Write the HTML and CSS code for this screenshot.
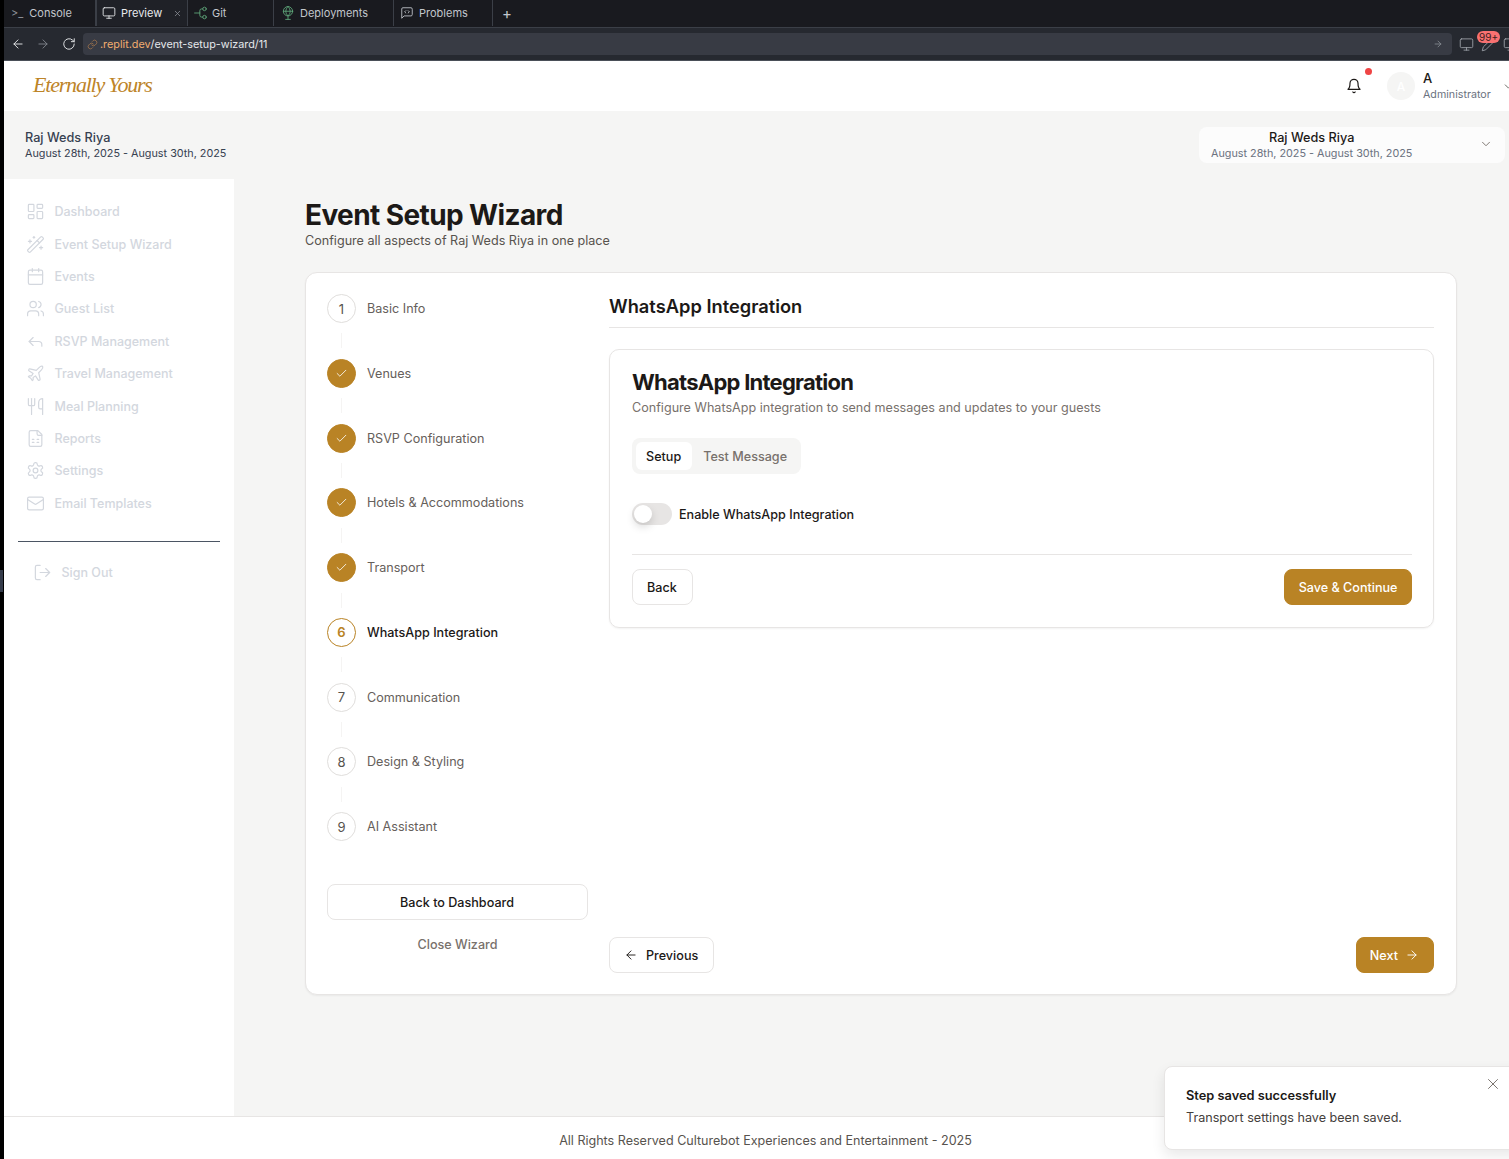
FILE: index.html
```html
<!DOCTYPE html>
<html lang="en">
<head>
  <meta charset="UTF-8">
  <title>Event Setup Wizard</title>
  <link rel="stylesheet" href="styles.css">
</head>
<body>
  <svg class="sprite" xmlns="http://www.w3.org/2000/svg">
    <symbol id="i-dashboard" viewBox="0 0 24 24"><rect x="3" y="3" width="7" height="9" rx="1"/><rect x="14" y="3" width="7" height="5" rx="1"/><rect x="14" y="12" width="7" height="9" rx="1"/><rect x="3" y="16" width="7" height="5" rx="1"/></symbol>
    <symbol id="i-wand" viewBox="0 0 24 24"><path d="m21.64 3.64-1.28-1.28a1.21 1.21 0 0 0-1.72 0L2.36 18.64a1.21 1.21 0 0 0 0 1.72l1.28 1.28a1.2 1.2 0 0 0 1.72 0L21.64 5.36a1.2 1.2 0 0 0 0-1.72"/><path d="m14 7 3 3"/><path d="M5 6v4"/><path d="M19 14v4"/><path d="M10 2v2"/><path d="M7 8H3"/><path d="M21 16h-4"/><path d="M11 3H9"/></symbol>
    <symbol id="i-calendar" viewBox="0 0 24 24"><path d="M8 2v4"/><path d="M16 2v4"/><rect x="3" y="4" width="18" height="18" rx="2"/><path d="M3 10h18"/></symbol>
    <symbol id="i-users" viewBox="0 0 24 24"><path d="M16 21v-2a4 4 0 0 0-4-4H6a4 4 0 0 0-4 4v2"/><circle cx="9" cy="7" r="4"/><path d="M22 21v-2a4 4 0 0 0-3-3.87"/><path d="M16 3.13a4 4 0 0 1 0 7.75"/></symbol>
    <symbol id="i-reply" viewBox="0 0 24 24"><polyline points="9 17 4 12 9 7"/><path d="M20 18v-2a4 4 0 0 0-4-4H4"/></symbol>
    <symbol id="i-plane" viewBox="0 0 24 24"><path d="M17.8 19.2 16 11l3.5-3.5C21 6 21.5 4 21 3c-1-.5-3 0-4.5 1.5L13 8 4.8 6.2c-.5-.1-.9.1-1.1.5l-.3.5c-.2.5-.1 1 .3 1.3L9 12l-2 3H4l-1 1 3 2 2 3 1-1v-3l3-2 3.5 5.3c.3.4.8.5 1.3.3l.5-.2c.4-.3.6-.7.5-1.2z"/></symbol>
    <symbol id="i-utensils" viewBox="0 0 24 24"><path d="M3 2v7c0 1.1.9 2 2 2h4a2 2 0 0 0 2-2V2"/><path d="M7 2v20"/><path d="M21 15V2a5 5 0 0 0-5 5v6c0 1.1.9 2 2 2h3Zm0 0v7"/></symbol>
    <symbol id="i-sheet" viewBox="0 0 24 24"><path d="M15 2H6a2 2 0 0 0-2 2v16a2 2 0 0 0 2 2h12a2 2 0 0 0 2-2V7Z"/><path d="M14 2v4a2 2 0 0 0 2 2h4"/><path d="M8 13h2"/><path d="M14 13h2"/><path d="M8 17h2"/><path d="M14 17h2"/></symbol>
    <symbol id="i-settings" viewBox="0 0 24 24"><path d="M12.22 2h-.44a2 2 0 0 0-2 2v.18a2 2 0 0 1-1 1.73l-.43.25a2 2 0 0 1-2 0l-.15-.08a2 2 0 0 0-2.73.73l-.22.38a2 2 0 0 0 .73 2.73l.15.1a2 2 0 0 1 1 1.72v.51a2 2 0 0 1-1 1.74l-.15.09a2 2 0 0 0-.73 2.73l.22.38a2 2 0 0 0 2.73.73l.15-.08a2 2 0 0 1 2 0l.43.25a2 2 0 0 1 1 1.73V20a2 2 0 0 0 2 2h.44a2 2 0 0 0 2-2v-.18a2 2 0 0 1 1-1.73l.43-.25a2 2 0 0 1 2 0l.15.08a2 2 0 0 0 2.73-.73l.22-.39a2 2 0 0 0-.73-2.73l-.15-.08a2 2 0 0 1-1-1.74v-.5a2 2 0 0 1 1-1.74l.15-.09a2 2 0 0 0 .73-2.73l-.22-.38a2 2 0 0 0-2.73-.73l-.15.08a2 2 0 0 1-2 0l-.43-.25a2 2 0 0 1-1-1.73V4a2 2 0 0 0-2-2z"/><circle cx="12" cy="12" r="3"/></symbol>
    <symbol id="i-mail" viewBox="0 0 24 24"><rect x="2" y="4" width="20" height="16" rx="2"/><path d="m22 7-8.97 5.7a1.94 1.94 0 0 1-2.06 0L2 7"/></symbol>
    <symbol id="i-logout" viewBox="0 0 24 24"><path d="M9 21H5a2 2 0 0 1-2-2V5a2 2 0 0 1 2-2h4"/><polyline points="16 17 21 12 16 7"/><line x1="21" y1="12" x2="9" y2="12"/></symbol>
    <symbol id="i-bell" viewBox="0 0 24 24"><path d="M6 8a6 6 0 0 1 12 0c0 7 3 9 3 9H3s3-2 3-9"/><path d="M10.3 21a1.94 1.94 0 0 0 3.4 0"/></symbol>
    <symbol id="i-chevron" viewBox="0 0 24 24"><path d="m6 9 6 6 6-6"/></symbol>
    <symbol id="i-check" viewBox="0 0 24 24"><path d="M20 6 9 17l-5-5"/></symbol>
    <symbol id="i-left" viewBox="0 0 24 24"><path d="m12 19-7-7 7-7"/><path d="M19 12H5"/></symbol>
    <symbol id="i-right" viewBox="0 0 24 24"><path d="M5 12h14"/><path d="m12 5 7 7-7 7"/></symbol>
    <symbol id="i-x" viewBox="0 0 24 24"><path d="M18 6 6 18"/><path d="m6 6 12 12"/></symbol>
    <symbol id="i-monitor" viewBox="0 0 24 24"><rect x="2" y="3" width="20" height="14" rx="2"/><path d="M8 21h8"/><path d="M12 17v4"/></symbol>
    <symbol id="i-reload" viewBox="0 0 24 24"><path d="M21 12a9 9 0 1 1-3-6.7L21 8"/><path d="M21 3v5h-5"/></symbol>
    <symbol id="i-link" viewBox="0 0 24 24"><path d="M10 13a5 5 0 0 0 7.5.5l3-3a5 5 0 0 0-7-7l-1.7 1.7"/><path d="M14 11a5 5 0 0 0-7.5-.5l-3 3a5 5 0 0 0 7 7l1.7-1.7"/></symbol>
    <symbol id="i-git" viewBox="0 0 24 24"><circle cx="18" cy="5" r="3"/><circle cx="18" cy="19" r="3"/><path d="M1 12h9"/><path d="M15 5h-2a3 3 0 0 0-3 3v8a3 3 0 0 0 3 3h2"/></symbol>
    <symbol id="i-globe" viewBox="0 0 24 24"><circle cx="12" cy="9" r="8"/><path d="M4 9h16"/><path d="M12 1c-5 5-5 11 0 16c5-5 5-11 0-16"/><path d="M12 17v6"/><path d="M8 23h8"/></symbol>
    <symbol id="i-chat" viewBox="0 0 24 24"><path d="M21 15a2 2 0 0 1-2 2H7l-4 4V5a2 2 0 0 1 2-2h14a2 2 0 0 1 2 2z"/><path d="m10 8-2 2 2 2"/><path d="m14 8 2 2-2 2"/></symbol>
    <symbol id="i-pencil" viewBox="0 0 24 24"><path d="M17 3a2.8 2.8 0 1 1 4 4L7.5 20.5 2 22l1.5-5.5z"/></symbol>
  </svg>

  <div class="frame">
    <div class="ide-tabs">
      <div class="ide-tab tab-console"><span class="prompt">&gt;_</span> Console</div>
      <div class="ide-tab tab-preview active"><svg class="ico ico-tab"><use href="#i-monitor"/></svg> Preview <svg class="ico tab-x"><use href="#i-x"/></svg></div>
      <div class="ide-tab tab-git"><svg class="ico ico-tab green"><use href="#i-git"/></svg> Git</div>
      <div class="ide-tab tab-deploy"><svg class="ico ico-tab green"><use href="#i-globe"/></svg> Deployments</div>
      <div class="ide-tab tab-problems"><svg class="ico ico-tab"><use href="#i-chat"/></svg> Problems</div>
      <div class="ide-tab tab-plus">+</div>
    </div>

    <div class="ide-url">
      <svg class="ico nav-ico"><use href="#i-left"/></svg>
      <svg class="ico nav-ico dim"><use href="#i-right"/></svg>
      <svg class="ico nav-ico reload"><use href="#i-reload"/></svg>
      <div class="url-box">
        <svg class="ico link-ico"><use href="#i-link"/></svg>
        <span class="url-host">.replit.dev</span><span>/event-setup-wizard/11</span>
        <svg class="ico url-go"><use href="#i-right"/></svg>
      </div>
      <svg class="ico url-tool"><use href="#i-monitor"/></svg>
      <svg class="ico url-tool"><use href="#i-pencil"/></svg>
      <svg class="ico url-tool"><use href="#i-monitor"/></svg>
      <span class="badge-99">99+</span>
    </div>

    <header class="topbar">
      <div class="logo">Eternally Yours</div>
      <div class="bell-wrap">
        <svg class="ico bell"><use href="#i-bell"/></svg>
        <span class="bell-dot"></span>
      </div>
      <div class="avatar">A</div>
      <div class="user">
        <div class="user-name">A</div>
        <div class="user-role">Administrator</div>
      </div>
      <svg class="ico user-chev"><use href="#i-chevron"/></svg>
    </header>

    <div class="event-bar">
      <div class="event-info">
        <div class="event-name">Raj Weds Riya</div>
        <div class="event-date">August 28th, 2025 - August 30th, 2025</div>
      </div>
      <div class="event-select">
        <div class="select-text">
          <div class="select-name">Raj Weds Riya</div>
          <div class="select-date">August 28th, 2025 - August 30th, 2025</div>
        </div>
        <svg class="ico select-chev"><use href="#i-chevron"/></svg>
      </div>
    </div>

    <div class="layout">
      <aside class="sidebar">
        <nav class="side-nav">
          <a class="side-link"><svg class="ico"><use href="#i-dashboard"/></svg>Dashboard</a>
          <a class="side-link"><svg class="ico"><use href="#i-wand"/></svg>Event Setup Wizard</a>
          <a class="side-link"><svg class="ico"><use href="#i-calendar"/></svg>Events</a>
          <a class="side-link"><svg class="ico"><use href="#i-users"/></svg>Guest List</a>
          <a class="side-link"><svg class="ico"><use href="#i-reply"/></svg>RSVP Management</a>
          <a class="side-link"><svg class="ico"><use href="#i-plane"/></svg>Travel Management</a>
          <a class="side-link"><svg class="ico"><use href="#i-utensils"/></svg>Meal Planning</a>
          <a class="side-link"><svg class="ico"><use href="#i-sheet"/></svg>Reports</a>
          <a class="side-link"><svg class="ico"><use href="#i-settings"/></svg>Settings</a>
          <a class="side-link"><svg class="ico"><use href="#i-mail"/></svg>Email Templates</a>
        </nav>
        <div class="side-rule"></div>
        <a class="side-link sign-out"><svg class="ico"><use href="#i-logout"/></svg>Sign Out</a>
      </aside>

      <main class="content">
        <h1 class="page-title">Event Setup Wizard</h1>
        <p class="page-sub">Configure all aspects of Raj Weds Riya in one place</p>

        <section class="wizard">
          <div class="steps-col">
            <div class="step"><span class="step-num">1</span><span class="step-label">Basic Info</span></div>
            <div class="step-line"></div>
            <div class="step"><span class="step-num done"><svg class="ico"><use href="#i-check"/></svg></span><span class="step-label">Venues</span></div>
            <div class="step-line"></div>
            <div class="step"><span class="step-num done"><svg class="ico"><use href="#i-check"/></svg></span><span class="step-label">RSVP Configuration</span></div>
            <div class="step-line"></div>
            <div class="step"><span class="step-num done"><svg class="ico"><use href="#i-check"/></svg></span><span class="step-label">Hotels &amp; Accommodations</span></div>
            <div class="step-line"></div>
            <div class="step"><span class="step-num done"><svg class="ico"><use href="#i-check"/></svg></span><span class="step-label">Transport</span></div>
            <div class="step-line"></div>
            <div class="step current"><span class="step-num">6</span><span class="step-label">WhatsApp Integration</span></div>
            <div class="step-line"></div>
            <div class="step"><span class="step-num">7</span><span class="step-label">Communication</span></div>
            <div class="step-line"></div>
            <div class="step"><span class="step-num">8</span><span class="step-label">Design &amp; Styling</span></div>
            <div class="step-line"></div>
            <div class="step"><span class="step-num">9</span><span class="step-label">AI Assistant</span></div>

            <button class="btn btn-wide">Back to Dashboard</button>
            <div class="close-wizard">Close Wizard</div>
          </div>

          <div class="step-col">
            <h2 class="step-title">WhatsApp Integration</h2>

            <div class="panel">
              <h3 class="panel-title">WhatsApp Integration</h3>
              <p class="panel-sub">Configure WhatsApp integration to send messages and updates to your guests</p>

              <div class="seg">
                <span class="seg-item on">Setup</span>
                <span class="seg-item">Test Message</span>
              </div>

              <div class="toggle-row">
                <span class="toggle"><span class="knob"></span></span>
                <span class="toggle-label">Enable WhatsApp Integration</span>
              </div>

              <div class="panel-foot">
                <button class="btn">Back</button>
                <button class="btn btn-gold">Save &amp; Continue</button>
              </div>
            </div>

            <div class="wizard-nav">
              <button class="btn btn-icon"><svg class="ico"><use href="#i-left"/></svg>Previous</button>
              <button class="btn btn-gold btn-icon">Next<svg class="ico"><use href="#i-right"/></svg></button>
            </div>
          </div>
        </section>
      </main>
    </div>

    <footer class="footer">All Rights Reserved Culturebot Experiences and Entertainment - 2025</footer>

    <div class="toast">
      <div class="toast-title">Step saved successfully</div>
      <div class="toast-text">Transport settings have been saved.</div>
      <svg class="ico toast-x"><use href="#i-x"/></svg>
    </div>

    <div class="edge-mark"></div>
  </div>
</body>
</html>
```

FILE: styles.css
```css
* {
  box-sizing: border-box;
}
html, body {
  margin: 0;
  height: 100%;
  overflow: hidden;
}
body {
  background: #000;
  font-family: Inter, "Liberation Sans", sans-serif;
  font-size: 12.6px;
  color: #1c1917;
}
.sprite {
  position: absolute;
  width: 0;
  height: 0;
}
.ico {
  width: 16px;
  height: 16px;
  flex: none;
  fill: none;
  stroke: currentColor;
  stroke-width: 2;
  stroke-linecap: round;
  stroke-linejoin: round;
}

.frame {
  position: relative;
  width: 1509px;
  height: 1159px;
  overflow: hidden;
  display: flex;
  flex-direction: column;
}

/* ide chrome */
.ide-tabs {
  height: 28px;
  padding-bottom: 1px;
  background: #191a1f;
  margin-left: 4px;
  display: flex;
  flex: none;
  color: #c2c6cc;
  font-size: 11px;
  border-bottom: 1px solid #3b3f47;
}
.ide-tab {
  display: flex;
  align-items: center;
  gap: 5px;
  border-right: 1px solid #3b3f47;
}
.tab-console {
  width: 92px;
  padding-left: 7px;
  gap: 6px;
}
.prompt {
  color: #8d9199;
}
.tab-preview {
  width: 92px;
  padding-left: 5px;
  background: #1f2127;
  color: #e8eaed;
  border-left: 1px solid #3b3f47;
}
.tab-x {
  width: 9px;
  height: 9px;
  color: #8d9199;
  margin-left: 6px;
}
.tab-git {
  width: 86px;
  padding-left: 6px;
  gap: 4px;
}
.tab-deploy {
  width: 120px;
  padding-left: 7px;
}
.tab-problems {
  width: 99px;
  padding-left: 6px;
}
.tab-plus {
  border: 0;
  padding-left: 9px;
  font-size: 15px;
}
.ico-tab {
  width: 14px;
  height: 14px;
  stroke-width: 1.5;
}
.green {
  color: #5fa77a;
}
.ide-url {
  position: relative;
  height: 33px;
  flex: none;
  margin-left: 4px;
  background: #262930;
  border-bottom: 1px solid #4a4f58;
  display: flex;
  align-items: center;
  padding-left: 7px;
  color: #e6e8eb;
  font-size: 10.8px;
}
.nav-ico {
  width: 14px;
  height: 14px;
  margin-right: 11px;
  stroke-width: 1.6;
}
.nav-ico.dim {
  color: #80848c;
}
.nav-ico.reload {
  margin-left: 1px;
  margin-right: 7px;
}
.url-box {
  width: 1369px;
  height: 22px;
  flex: none;
  background: #383b44;
  border-radius: 4px;
  display: flex;
  align-items: center;
  padding: 0 9px 0 4px;
}
.link-ico {
  width: 11px;
  height: 11px;
  margin-right: 2px;
  color: #a8794d;
  stroke-width: 1.6;
}
.url-host {
  color: #f2ad6f;
}
.url-go {
  width: 10px;
  height: 10px;
  margin-left: auto;
  color: #878b93;
}
.url-tool {
  width: 15px;
  height: 15px;
  margin-left: 7px;
  color: #9ea2a9;
  stroke-width: 1.4;
  flex: none;
}
.badge-99 {
  position: absolute;
  left: 1473px;
  top: 3px;
  width: 23px;
  height: 12px;
  border-radius: 6px;
  background: #f87171;
  color: #3a2020;
  font-size: 10px;
  line-height: 12px;
  text-align: center;
}

/* app header */
.topbar {
  height: 50px;
  flex: none;
  margin-left: 4px;
  background: #fff;
  display: flex;
  align-items: center;
  padding-left: 29px;
}
.logo {
  font-family: "Liberation Serif", serif;
  font-style: italic;
  font-size: 22px;
  color: #bd8428;
  letter-spacing: -1.2px;
  width: 1300px;
  flex: none;
  margin-top: -2px;
}
.bell-wrap {
  position: relative;
  width: 16px;
  height: 16px;
  margin-left: 13px;
  flex: none;
}
.bell {
  display: block;
  stroke-width: 1.8;
}
.bell-dot {
  position: absolute;
  left: 19px;
  top: -10px;
  width: 7px;
  height: 7px;
  border-radius: 50%;
  background: #ef4444;
}
.avatar {
  width: 28px;
  height: 28px;
  flex: none;
  margin-left: 25px;
  border-radius: 50%;
  background: #f5f5f4;
  color: #fff;
  display: flex;
  align-items: center;
  justify-content: center;
  font-size: 12px;
  font-weight: 500;
}
.user {
  margin-left: 8px;
  width: 79px;
  flex: none;
}
.user-name {
  font-size: 13px;
  font-weight: 500;
  line-height: 17px;
}
.user-role {
  font-size: 10.7px;
  color: #6b7280;
  line-height: 15px;
}
.user-chev {
  width: 13px;
  height: 13px;
  color: #57534e;
  stroke-width: 1.6;
  flex: none;
}

/* event bar */
.event-bar {
  height: 68px;
  flex: none;
  margin-left: 4px;
  background: #f5f5f4;
  display: flex;
  justify-content: space-between;
  align-items: flex-start;
  padding: 16px 4px 0 21px;
}
.event-info {
  padding-top: 1px;
}
.event-name {
  font-size: 12.7px;
  font-weight: 500;
  line-height: 19px;
  color: #374151;
}
.event-date {
  font-size: 10.8px;
  line-height: 13px;
  color: #374151;
}
.event-select {
  width: 306px;
  height: 36px;
  background: #fcfcfc;
  border-radius: 8px;
  display: flex;
  align-items: center;
  padding: 0 12px 2px;
  justify-content: space-between;
}
.select-text {
  text-align: center;
}
.select-name {
  font-size: 12.7px;
  font-weight: 500;
  line-height: 19px;
}
.select-date {
  font-size: 10.8px;
  line-height: 13px;
  color: #6b7280;
}
.select-chev {
  width: 14px;
  height: 14px;
  color: #78716c;
  stroke-width: 1.6;
}

/* layout */
.layout {
  flex: 1;
  display: flex;
  margin-left: 4px;
  background: #f5f5f4;
  min-height: 0;
}
.sidebar {
  width: 230px;
  flex: none;
  background: #fff;
  padding: 16.6px 14px 0 14px;
}
.side-link {
  height: 32.4px;
  display: flex;
  align-items: center;
  gap: 10px;
  padding-left: 7.5px;
  color: #d3d7de;
  font-size: 12.5px;
  font-weight: 500;
}
.side-link .ico {
  stroke-width: 1.5;
  width: 19px;
  height: 19px;
}
.side-rule {
  height: 1px;
  background: #4b5563;
  margin-top: 21px;
  margin-bottom: 15px;
}
.sign-out {
  padding-left: 14.5px;
}
.content {
  flex: 1;
  padding: 20px 52px 0 71px;
  min-width: 0;
}
.page-title {
  margin: 0;
  font-size: 28px;
  line-height: 32px;
  font-weight: 700;
  letter-spacing: -0.6px;
  color: #1c1917;
}
.page-sub {
  margin: 0 0 22px;
  line-height: 19px;
  color: #57534e;
}

/* wizard card */
.wizard {
  height: 723px;
  background: #fff;
  border: 1px solid #e7e5e4;
  border-radius: 12px;
  box-shadow: 0 1px 2px rgba(0, 0, 0, 0.05);
  padding: 21px 22px 21px 21px;
  display: flex;
  gap: 21px;
}
.steps-col {
  width: 261px;
  flex: none;
}
.step {
  display: flex;
  align-items: center;
  gap: 11px;
  height: 29px;
}
.step-num {
  width: 29px;
  height: 29px;
  flex: none;
  border: 1px solid #e0dedc;
  border-radius: 50%;
  display: flex;
  align-items: center;
  justify-content: center;
  color: #57534e;
  font-size: 13px;
}
.step-num.done {
  background: #b98325;
  border-color: #b98325;
  color: #fff;
}
.step-num .ico {
  width: 13px;
  height: 13px;
  stroke-width: 1.5;
}
.step-label {
  color: #66605b;
}
.step.current .step-num {
  border-color: #b98325;
  color: #b98325;
  font-weight: 600;
}
.step.current .step-label {
  color: #1c1917;
  font-weight: 500;
}
.step-line {
  width: 1px;
  height: 15px;
  margin: 10.4px 0 10.4px 14px;
  background: #f5f4f3;
}
.btn {
  height: 36px;
  padding: 0 15px 0 14px;
  font-family: inherit;
  font-size: 12.6px;
  font-weight: 500;
  color: #1c1917;
  background: #fff;
  border: 1px solid #e7e5e4;
  border-radius: 8px;
  display: inline-flex;
  align-items: center;
  justify-content: center;
}
.btn-gold {
  padding: 0 13.5px;
  background: #b98325;
  border-color: #b98325;
  color: #fff;
}
.btn-wide {
  width: 100%;
  margin-top: 43px;
}
.close-wizard {
  margin-top: 16px;
  text-align: center;
  color: #78716c;
  font-weight: 500;
  line-height: 18px;
}
.step-col {
  flex: 1;
  min-width: 0;
  display: flex;
  flex-direction: column;
}
.step-title {
  margin: 0;
  height: 34px;
  font-size: 18.3px;
  line-height: 25px;
  font-weight: 600;
  color: #1c1917;
  border-bottom: 1px solid #e7e5e4;
}
.panel {
  margin-top: 21px;
  height: 279px;
  border: 1px solid #e7e5e4;
  border-radius: 10px;
  box-shadow: 0 1px 2px rgba(0, 0, 0, 0.05);
  padding: 18px 21px 0 22px;
}
.panel-title {
  margin: 0;
  font-size: 22px;
  line-height: 28px;
  font-weight: 700;
  letter-spacing: -0.75px;
}
.panel-sub {
  margin: 2px 0 21px;
  line-height: 19px;
  color: #78716c;
}
.seg {
  display: inline-flex;
  height: 36px;
  padding: 4px;
  background: #f5f5f4;
  border-radius: 8px;
  vertical-align: top;
}
.seg-item {
  padding: 0 10px 0 11px;
  display: flex;
  align-items: center;
  font-weight: 500;
  color: #78716c;
  border-radius: 6px;
}
.seg-item.on {
  background: #fff;
  color: #1c1917;
  padding: 0 11px 0 10px;
}
.toggle-row {
  margin-top: 29px;
  display: flex;
  align-items: center;
  gap: 7px;
}
.toggle {
  width: 40px;
  height: 22px;
  padding: 2px;
  border-radius: 11px;
  background: #e7e5e4;
  display: block;
}
.knob {
  display: block;
  width: 18px;
  height: 18px;
  border-radius: 50%;
  background: #fff;
  box-shadow: 0 4px 8px rgba(0, 0, 0, 0.15);
}
.toggle-label {
  font-weight: 500;
}
.panel-foot {
  margin-top: 29px;
  padding-top: 14px;
  border-top: 1px solid #e7e5e4;
  display: flex;
  justify-content: space-between;
}
.wizard-nav {
  margin-top: auto;
  display: flex;
  justify-content: space-between;
}
.btn-icon {
  gap: 8px;
}
.btn-gold.btn-icon {
  gap: 7px;
  padding: 0 14px 0 13px;
}
.btn-icon .ico {
  width: 14px;
  height: 14px;
  stroke-width: 1.6;
}

/* footer + toast */
.footer {
  height: 43px;
  flex: none;
  margin-left: 4px;
  background: #fff;
  border-top: 1px solid #e7e5e4;
  padding: 4px 0 0 18px;
  display: flex;
  align-items: center;
  justify-content: center;
  color: #57534e;
  font-size: 12.56px;
}
.toast {
  position: absolute;
  left: 1164px;
  top: 1066px;
  width: 360px;
  height: 84px;
  background: #fff;
  border: 1px solid #e7e5e4;
  border-radius: 8px;
  box-shadow: 0 6px 14px rgba(0, 0, 0, 0.09);
  padding: 20px 21px;
}
.toast-title {
  font-size: 12.8px;
  font-weight: 600;
  color: #1c1917;
  line-height: 18px;
}
.toast-text {
  margin-top: 4px;
  line-height: 18px;
  color: #44403c;
}
.toast-x {
  position: absolute;
  left: 319px;
  top: 8px;
  width: 18px;
  height: 18px;
  color: #78716c;
  stroke-width: 1.3;
}
.edge-mark {
  position: absolute;
  left: 0;
  top: 570px;
  width: 3px;
  height: 22px;
  background: #343b4a;
}
```
